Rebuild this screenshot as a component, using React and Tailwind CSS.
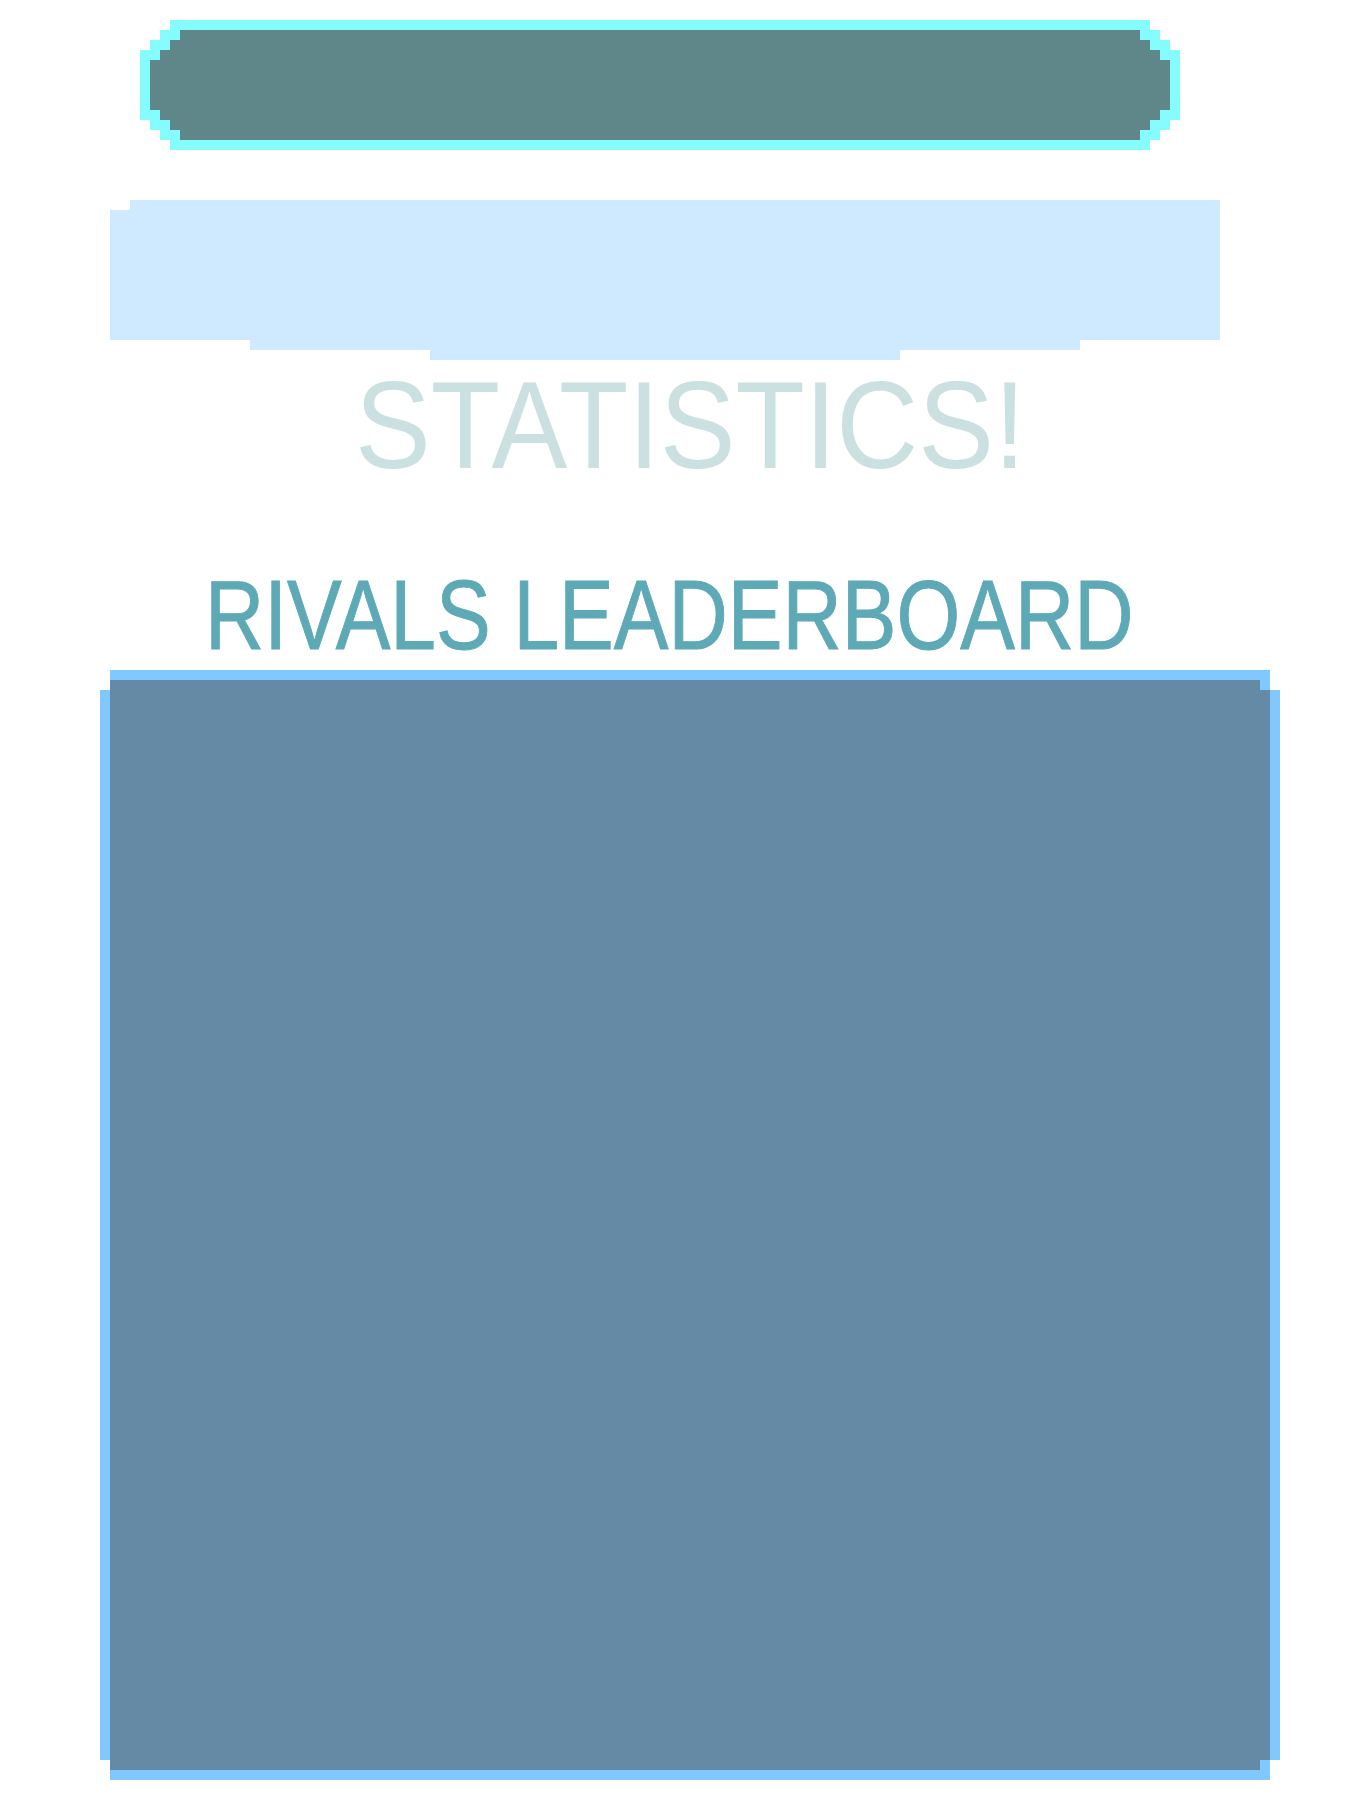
const pillRows = [
  'ml-[170px] w-[980px] h-[10px] bg-[#85fdfe]',
  'ml-[160px] w-[1000px] h-[10px] bg-[#5f8688] border-x-[20px] border-[#85fdfe]',
  'ml-[150px] w-[1020px] h-[10px] bg-[#5f8688] border-x-[20px] border-[#85fdfe]',
  'ml-[140px] w-[1040px] h-[10px] bg-[#5f8688] border-x-[20px] border-[#85fdfe]',
  'ml-[140px] w-[1040px] h-[50px] bg-[#5f8688] border-x-[10px] border-[#85fdfe]',
  'ml-[140px] w-[1040px] h-[10px] bg-[#5f8688] border-x-[20px] border-[#85fdfe]',
  'ml-[150px] w-[1020px] h-[10px] bg-[#5f8688] border-x-[20px] border-[#85fdfe]',
  'ml-[160px] w-[1000px] h-[10px] bg-[#5f8688] border-x-[20px] border-[#85fdfe]',
  'ml-[170px] w-[980px] h-[10px] bg-[#85fdfe]',
];

const bannerRows = [
  'ml-[130px] w-[1090px] h-[10px]',
  'ml-[110px] w-[1110px] h-[130px]',
  'ml-[250px] w-[830px] h-[10px]',
  'ml-[430px] w-[470px] h-[10px]',
];

const panelRows = [
  'ml-[110px] w-[1160px] h-[10px] bg-[#80c8ff]',
  'ml-[110px] w-[1160px] h-[10px] bg-[#648aa5] border-r-[10px] border-[#80c8ff]',
  'ml-[100px] w-[1180px] h-[1070px] bg-[#648aa5] border-x-[10px] border-[#80c8ff]',
  'ml-[110px] w-[1160px] h-[10px] bg-[#648aa5] border-r-[10px] border-[#80c8ff]',
  'ml-[110px] w-[1160px] h-[10px] bg-[#80c8ff]',
];

export default function App() {
  return (
    <div className="w-[1350px] h-[1800px] bg-white pt-[20px] overflow-hidden font-['Liberation_Sans',Arial,sans-serif]">
      {/* top pill */}
      <div>
        {pillRows.map((cls, i) => <div key={i} className={cls} />)}
      </div>

      {/* light blue banner */}
      <div className="mt-[50px]">
        {bannerRows.map((cls, i) => <div key={i} className={`${cls} bg-[#cfe9ff]`} />)}
      </div>

      <h1 className="mt-[20px] ml-[355px] h-[90px] text-[125px] leading-[90px] font-normal whitespace-nowrap text-[#cbe0e1] origin-left scale-x-[0.908]">
        STATISTICS!
      </h1>

      <h2 className="mt-[110px] ml-[205px] h-[70px] text-[98px] leading-[70px] font-normal whitespace-nowrap text-[#5da9b5] [-webkit-text-stroke:1px_#5da9b5] origin-left scale-x-[0.837]">
        RIVALS LEADERBOARD
      </h2>

      {/* leaderboard panel */}
      <div className="mt-[20px]">
        {panelRows.map((cls, i) => <div key={i} className={cls} />)}
      </div>
    </div>
  );
}
